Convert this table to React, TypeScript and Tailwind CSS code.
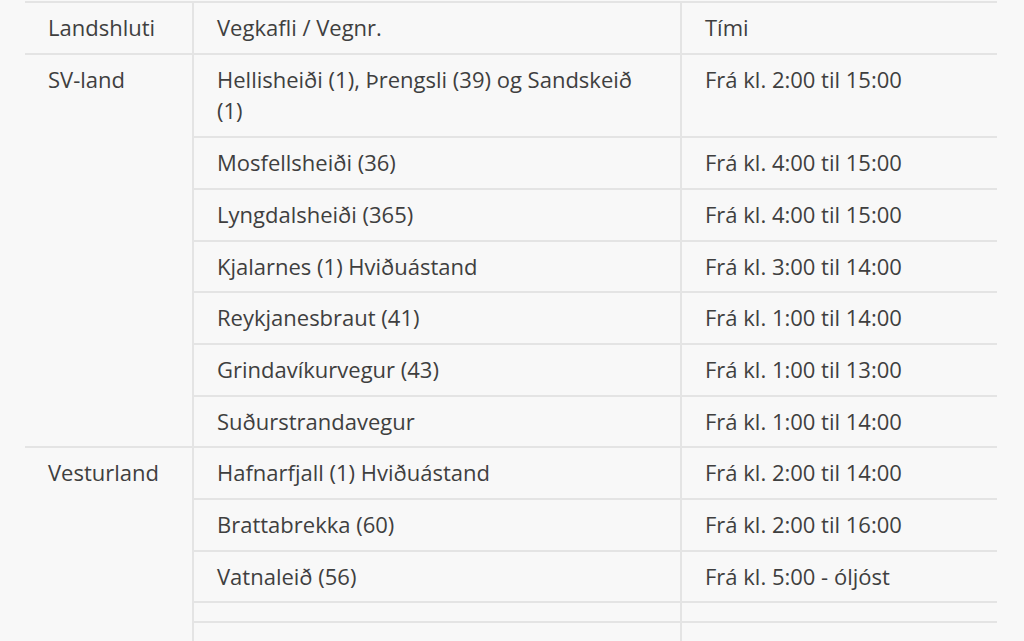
const rows: { region?: string; span?: number; road: string; time: string }[] = [
  { region: 'SV-land', span: 7, road: 'Hellisheiði (1), Þrengsli (39) og Sandskeið (1)', time: 'Frá kl. 2:00 til 15:00' },
  { road: 'Mosfellsheiði (36)', time: 'Frá kl. 4:00 til 15:00' },
  { road: 'Lyngdalsheiði (365)', time: 'Frá kl. 4:00 til 15:00' },
  { road: 'Kjalarnes (1) Hviðuástand', time: 'Frá kl. 3:00 til 14:00' },
  { road: 'Reykjanesbraut (41)', time: 'Frá kl. 1:00 til 14:00' },
  { road: 'Grindavíkurvegur (43)', time: 'Frá kl. 1:00 til 13:00' },
  { road: 'Suðurstrandavegur', time: 'Frá kl. 1:00 til 14:00' },
  { region: 'Vesturland', span: 5, road: 'Hafnarfjall (1) Hviðuástand', time: 'Frá kl. 2:00 til 14:00' },
  { road: 'Brattabrekka (60)', time: 'Frá kl. 2:00 til 16:00' },
  { road: 'Vatnaleið (56)', time: 'Frá kl. 5:00 - óljóst' },
  { road: '', time: '' },
  { road: '', time: '' },
];

const cell = 'border-2 border-[#e4e4e4] pl-[23px] pr-[28px] py-[9px] align-top';

export default function App() {
  return (
    <div
      className="min-h-[641px] bg-[#f8f8f8] px-[25px] pt-px text-[22px] leading-[31.7px] text-[#3f3f3f]"
      style={{ fontFamily: '"Open Sans", "Noto Sans", sans-serif' }}
    >
      <table className="w-[972px] table-fixed border-collapse">
        <colgroup>
          <col className="w-[168px]" />
          <col className="w-[488px]" />
          <col className="w-[316px]" />
        </colgroup>
        <thead>
          <tr>
            <td className={cell + ' border-l-0'}>Landshluti</td>
            <td className={cell}>Vegkafli / Vegnr.</td>
            <td className={cell + ' border-r-0'}>Tími</td>
          </tr>
        </thead>
        <tbody>
          {rows.map((r, i) => (
            <tr key={i}>
              {r.region && (
                <td rowSpan={r.span} className={cell + ' border-l-0'}>
                  {r.region}
                </td>
              )}
              <td className={cell + (r.road ? '' : ' h-[20px] !py-0')}>{r.road}</td>
              <td className={cell + ' border-r-0' + (r.time ? '' : ' h-[20px] !py-0')}>{r.time}</td>
            </tr>
          ))}
        </tbody>
      </table>
    </div>
  );
}
